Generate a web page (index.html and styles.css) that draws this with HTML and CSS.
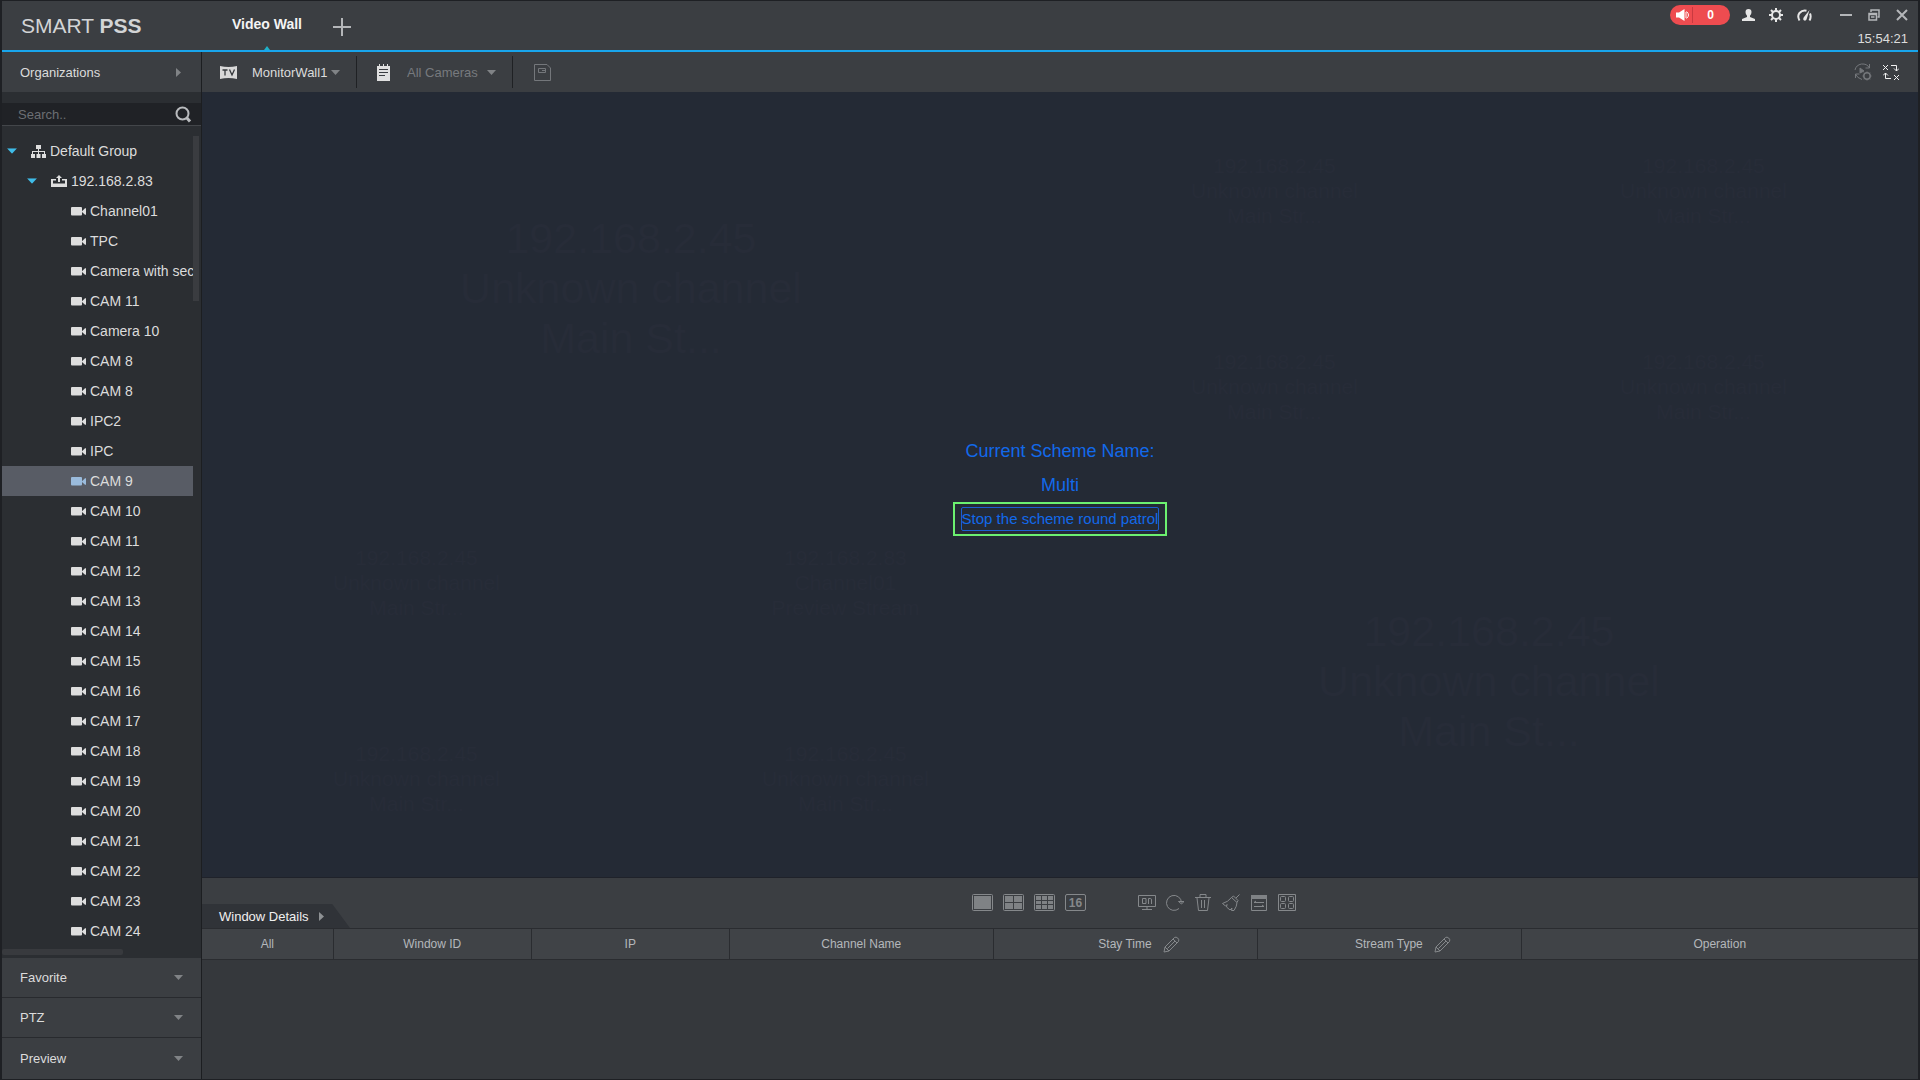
FILE: index.html
```html
<!DOCTYPE html>
<html lang="en">
<head>
    <meta charset="UTF-8">
    <meta name="viewport" content="width=device-width, initial-scale=1.0">
    <title>SMART PSS</title>
    <link rel="stylesheet" href="styles.css">
</head>
<body>
    <!-- shared icons -->
    <svg class="sprite" aria-hidden="true">
        <symbol id="cam" viewBox="0 0 15 9">
            <rect x="0" y="0" width="11" height="8.5" rx="1"/>
            <path d="M11 4.2L14 1.2H15V7.8H14L11 5Z"/>
        </symbol>
        <symbol id="down" viewBox="0 0 9 5"><path d="M0 0H9L4.5 5Z"/></symbol>
        <symbol id="right" viewBox="0 0 5 9"><path d="M0 0L5 4.5L0 9Z"/></symbol>
        <symbol id="pencil" viewBox="0 0 17 17">
            <path d="M1 16L2 11L11.500 1.500Q13 .5 14.700 2Q16.500 3.700 15.500 5.500L6 15ZM2 11L6 15M10 3L14 7M4.500 12.500L12 5"/>
        </symbol>
    </svg>

    <div class="app">
        <header class="titlebar">
            <h1 class="logo">SMART <b>PSS</b></h1>
            <nav class="tabs">
                <a class="tab" href="#">Video Wall</a>
                <button class="add" aria-label="New tab">
                    <svg width="18" height="18" viewBox="0 0 18 18"><path d="M9 0V18M0 9H18"/></svg>
                </button>
            </nav>
            <div class="status">
                <div class="icons">
                    <button class="alarm" aria-label="Alarms">
                        <svg width="14" height="12" viewBox="0 0 14 12"><path d="M0 3.500H3L8.500 0V12L3 8.500H0Z" fill="#fff"/><path d="M10 3V9M10.500 2.500Q14.500 6 10.500 9.500" fill="none" stroke="#fff"/></svg>
                        <span>0</span>
                    </button>
                    <button class="user" aria-label="User">
                        <svg width="13" height="12" viewBox="0 0 13 12"><path d="M3.500 3Q3.500 0 6.500 0T9.500 3Q9.500 5.500 8 6.800V8L13 10V12H0V10L5 8V6.800Q3.500 5.500 3.500 3Z"/></svg>
                    </button>
                    <button class="gear" aria-label="Settings">
                        <svg width="14" height="14" viewBox="0 0 14 14"><circle cx="7" cy="7" r="4" fill="none" stroke="#e6e6e6" stroke-width="2"/><path d="M7 0V3M7 11V14M0 7H3M11 7H14M2 2L4.200 4.200M9.800 9.800L12 12M12 2L9.800 4.200M4.200 9.800L2 12" stroke="#e6e6e6" stroke-width="2"/></svg>
                    </button>
                    <button class="gauge" aria-label="Performance">
                        <svg width="15" height="12" viewBox="0 0 15 12"><path d="M2.500 11.500Q0 7 2.500 4Q5.500 .8 9.500 1.800M13 4.500Q14.500 8 12.500 11.500" fill="none" stroke="#e6e6e6" stroke-width="2"/><path d="M12.500 1L9.500 10.500Q8.500 12.500 6.500 11Q5.800 9.500 7 8Z"/></svg>
                    </button>
                    <button class="minimize" aria-label="Minimize">
                        <svg width="12" height="2" viewBox="0 0 12 2"><path d="M0 0H12V2H0Z"/></svg>
                    </button>
                    <button class="restore" aria-label="Restore">
                        <svg class="outline" width="12" height="12" viewBox="0 0 12 12" stroke="#b4b6b9" stroke-width="1.500"><path d="M3 3V1H11V8H9.500"/><path d="M1 4.500H8.500V11H1ZM1 5.500H8.500M3 8H6.500"/></svg>
                    </button>
                    <button class="close" aria-label="Close">
                        <svg width="12" height="12" viewBox="0 0 12 12"><path d="M1 1L11 11M11 1L1 11" stroke="#b4b6b9" stroke-width="2"/></svg>
                    </button>
                </div>
                <time>15:54:21</time>
            </div>
        </header>

        <div class="body">
            <aside class="sidebar">
                <button class="section">Organizations <svg class="gray" width="5" height="9"><use href="#right"/></svg></button>
                <div class="search">
                    <input type="text" placeholder="Search.." aria-label="Search">
                    <svg width="17" height="17" viewBox="0 0 17 17"><circle cx="7.500" cy="7.500" r="6" fill="none" stroke="#b9bbbe" stroke-width="2"/><path d="M11.500 11.500L15 15.500" stroke="#b9bbbe" stroke-width="3"/></svg>
                </div>
                <div class="tree">
                    <ul>
                        <li class="group"><svg class="blue" width="10" height="6" viewBox="0 0 9 5"><use href="#down"/></svg><svg width="15" height="13" viewBox="0 0 15 13"><path d="M5 0H10V4H8V6H14V9H15V13H11V9H13V7H8V9H9.500V13H5.500V9H7V7H2V9H4V13H0V9H1V6H7V4H5Z"/></svg>Default Group</li>
                        <li class="device"><svg class="blue" width="10" height="6" viewBox="0 0 9 5"><use href="#down"/></svg><svg width="16" height="12" viewBox="0 0 16 12"><path d="M8 0L11 3H9V7H7V3H5ZM0 4H5V5.500H2V8.500H14V5.500H11V4H16V12H0Z"/></svg>192.168.2.83</li>
                        <li><svg><use href="#cam"/></svg>Channel01</li>
                        <li><svg><use href="#cam"/></svg>TPC</li>
                        <li><svg><use href="#cam"/></svg>Camera with sec</li>
                        <li><svg><use href="#cam"/></svg>CAM 11</li>
                        <li><svg><use href="#cam"/></svg>Camera 10</li>
                        <li><svg><use href="#cam"/></svg>CAM 8</li>
                        <li><svg><use href="#cam"/></svg>CAM 8</li>
                        <li><svg><use href="#cam"/></svg>IPC2</li>
                        <li><svg><use href="#cam"/></svg>IPC</li>
                        <li class="selected"><svg><use href="#cam"/></svg>CAM 9</li>
                        <li><svg><use href="#cam"/></svg>CAM 10</li>
                        <li><svg><use href="#cam"/></svg>CAM 11</li>
                        <li><svg><use href="#cam"/></svg>CAM 12</li>
                        <li><svg><use href="#cam"/></svg>CAM 13</li>
                        <li><svg><use href="#cam"/></svg>CAM 14</li>
                        <li><svg><use href="#cam"/></svg>CAM 15</li>
                        <li><svg><use href="#cam"/></svg>CAM 16</li>
                        <li><svg><use href="#cam"/></svg>CAM 17</li>
                        <li><svg><use href="#cam"/></svg>CAM 18</li>
                        <li><svg><use href="#cam"/></svg>CAM 19</li>
                        <li><svg><use href="#cam"/></svg>CAM 20</li>
                        <li><svg><use href="#cam"/></svg>CAM 21</li>
                        <li><svg><use href="#cam"/></svg>CAM 22</li>
                        <li><svg><use href="#cam"/></svg>CAM 23</li>
                        <li><svg><use href="#cam"/></svg>CAM 24</li>
                    </ul>
                    <div class="vscroll"></div>
                </div>
                <div class="hscroll"></div>
                <button class="section">Favorite <svg class="gray" width="9" height="5"><use href="#down"/></svg></button>
                <button class="section">PTZ <svg class="gray" width="9" height="5"><use href="#down"/></svg></button>
                <button class="section">Preview <svg class="gray" width="9" height="5"><use href="#down"/></svg></button>
            </aside>

            <main class="main">
                <div class="toolbar">
                    <label class="pick">
                        <svg width="17" height="13" viewBox="0 0 17 13"><path d="M0 0Q8.500 2 17 0V13Q8.500 11 0 13Z" fill="#d8d8d8"/><path d="M2.500 4H7.500M5 4V9.500M9.500 3.500L12 9L14.500 3.500" fill="none" stroke="#35383c" stroke-width="1.300"/></svg>
                        <select class="wall" aria-label="Wall"><option>MonitorWall1</option></select>
                        <svg class="gray" width="9" height="5"><use href="#down"/></svg>
                    </label>
                    <label class="pick">
                        <svg width="13" height="17" viewBox="0 0 13 17"><path d="M0 2H2V0H3V2H6V0H7V2H10V0H11V2H13V17H0Z" fill="#e0e0e0"/><path d="M2 5.500H11M2 8.500H11M2 11.500H8" stroke="#3a3d41"/></svg>
                        <select class="cameras" aria-label="Cameras" disabled><option>All Cameras</option></select>
                        <svg class="gray" width="9" height="5"><use href="#down"/></svg>
                    </label>
                    <button class="save" aria-label="Save">
                        <svg class="outline" width="17" height="17" viewBox="0 0 17 17" stroke="#74777b"><path d="M.5 .5H13L16.500 4V16.500H.5ZM4.500 4.500H11.500V8.500H4.500ZM8 6.500H11"/></svg>
                    </button>
                    <div class="tools">
                        <button aria-label="Scheme patrol">
                            <svg class="outline" width="18" height="18" viewBox="0 0 18 18" stroke="#74777b"><path d="M1 7Q2 2 7.500 1Q13 .5 15.500 5M15.500 1V5H11.500M1.500 11Q3 15 8 16.500M1.500 15V11H5.500"/><path d="M6 5L10 8L6 10Z" fill="#74777b"/><circle cx="13" cy="13" r="3.200" stroke-width="1.500"/><path d="M13 8.500V10M13 16V17.500M8.500 13H10M16 13H17.500M9.800 9.800L11 11M15 15L16.200 16.200M16.200 9.800L15 11M11 15L9.800 16.200"/></svg>
                        </button>
                        <button aria-label="Bind">
                            <svg class="outline" width="16" height="16" viewBox="0 0 16 16" stroke="#f0f0f0"><path d="M0 1L5 6M5 1L0 6M11 11L16 16M16 11L11 16M8 1.500H13.500V7M11 4.500L13.500 7L16 4.500M8 14.500H2.500V9M0 11.500L2.500 9L5 11.500"/></svg>
                        </button>
                    </div>
                </div>

                <section class="wall-view">
                    <div class="screen"><div class="cell big">192.168.2.45<br>Unknown channel<br>Main St...</div></div>
                    <div class="screen split">
                        <div class="cell">192.168.2.45<br>Unknown channel<br>Main Str...</div>
                        <div class="cell">192.168.2.45<br>Unknown channel<br>Main Str...</div>
                        <div class="cell">192.168.2.45<br>Unknown channel<br>Main Str...</div>
                        <div class="cell">192.168.2.45<br>Unknown channel<br>Main Str...</div>
                    </div>
                    <div class="screen split">
                        <div class="cell">192.168.2.45<br>Unknown channel<br>Main Str...</div>
                        <div class="cell">192.168.2.83<br>Channel01<br>Preview Stream</div>
                        <div class="cell">192.168.2.45<br>Unknown channel<br>Main Str...</div>
                        <div class="cell">192.168.2.45<br>Unknown channel<br>Main Str...</div>
                    </div>
                    <div class="screen"><div class="cell big">192.168.2.45<br>Unknown channel<br>Main St...</div></div>

                    <div class="scheme">
                        <p>Current Scheme Name:</p>
                        <p>Multi</p>
                        <div class="highlight"><button>Stop the scheme round patrol</button></div>
                    </div>
                </section>

                <div class="controls">
                    <button class="details-tab">Window Details <svg width="5" height="9"><use href="#right"/></svg></button>
                    <div class="layouts">
                        <button aria-label="1 window"><svg width="21" height="17" viewBox="0 0 21 17"><rect x=".5" y=".5" width="20" height="16" rx="1"/><path class="solid" d="M2 2H19V15H2Z"/></svg></button>
                        <button aria-label="4 windows"><svg width="21" height="17" viewBox="0 0 21 17"><rect x=".5" y=".5" width="20" height="16" rx="1"/><path class="solid" d="M2 2H10V8H2ZM11 2H19V8H11ZM2 9H10V15H2ZM11 9H19V15H11Z"/></svg></button>
                        <button aria-label="9 windows"><svg width="21" height="17" viewBox="0 0 21 17"><rect x=".5" y=".5" width="20" height="16" rx="1"/><path class="solid" d="M2 2H7V6H2ZM8 2H13V6H8ZM14 2H19V6H14ZM2 7H7V10H2ZM8 7H13V10H8ZM14 7H19V10H14ZM2 11H7V15H2ZM8 11H13V15H8ZM14 11H19V15H14Z"/></svg></button>
                        <button class="sixteen">16</button>
                    </div>
                    <div class="actions">
                        <button aria-label="Screen on"><svg width="18" height="17" viewBox="0 0 18 17"><path d="M.5 1.500H17.500V12.500H.5ZM9 12.500V15.500M4 15.500H14M4.500 4.500H8V9.500H4.500ZM10.500 10V4.500H12.500Q13.500 4.500 13.500 6V10"/></svg></button>
                        <button aria-label="Refresh"><svg width="18" height="17" viewBox="0 0 18 17"><path d="M13 14.500A7.500 7.500 0 1 1 15.500 8.500M12.500 7.500L15.500 10L18 7.500Z"/></svg></button>
                        <button aria-label="Delete"><svg width="18" height="17" viewBox="0 0 18 17"><path d="M1 3.500H17M6 3V.5H12V3M3 4L4.500 16.500H13.500L15 4M7.500 6V14M10.500 6V14"/></svg></button>
                        <button aria-label="Clear"><svg width="18" height="17" viewBox="0 0 18 17"><path d="M17.500 .5L14 4M9.500 3.500L11.500 2L16 6.500L15 8.500ZM9.500 3.500Q6 8 .5 9.500L3.500 12L5 10.500L4.500 13L8 16L10 14L9.500 16.500H12Q15 12 15 8.500"/></svg></button>
                        <button aria-label="Schedule"><svg width="18" height="17" viewBox="0 0 18 17"><path d="M1.500 1.500H16.500V16.500H1.500ZM4 8.500H14M6 7L4 8.500M4 12.500H14M12 11L14 12.500"/><path class="solid" d="M1 1H17V5H1Z"/></svg></button>
                        <button aria-label="Templates"><svg width="18" height="17" viewBox="0 0 18 17"><path d="M.5 .5H17.500V16.500H.5Z"/><rect x="2.500" y="2.500" width="5" height="5" rx="1"/><rect x="10.500" y="2.500" width="5" height="5" rx="1"/><rect x="2.500" y="9.500" width="5" height="5" rx="1"/><rect x="10.500" y="9.500" width="5" height="5" rx="1"/></svg></button>
                    </div>
                </div>

                <div class="details">
                    <table>
                        <thead>
                            <tr>
                                <th class="all">All</th>
                                <th class="narrow">Window ID</th>
                                <th class="narrow">IP</th>
                                <th class="wide">Channel Name</th>
                                <th class="wide editable">Stay Time <svg width="17" height="17"><use href="#pencil"/></svg></th>
                                <th class="wide editable">Stream Type <svg width="17" height="17"><use href="#pencil"/></svg></th>
                                <th>Operation</th>
                            </tr>
                        </thead>
                    </table>
                </div>
            </main>
        </div>
    </div>
</body>
</html>
```

FILE: styles.css
```css
*{
    margin: 0;
    padding: 0;
    box-sizing: border-box;
}
body{
    font-family: "Liberation Sans", Arial, sans-serif;
    font-size: 13px;
    color: #dcdcdc;
    background-color: #1e2024;
}
button, input, select{
    font: inherit;
    color: inherit;
    background: none;
    border: none;
}
button{
    display: flex;
    align-items: center;
    justify-content: center;
    cursor: pointer;
}
svg{
    flex: none;
    fill: #e6e6e6;
}
ul{
    list-style: none;
}
.sprite{
    position: absolute;
    width: 0;
    height: 0;
}
.gray{
    fill: #808386;
}
.outline{
    fill: none;
}
.app{
    display: flex;
    flex-direction: column;
    height: 100vh;
    border: 1px solid #1e2024;
    border-width: 1px 2px;
}

/* title bar */
.titlebar{
    display: flex;
    height: 51px;
    flex: none;
    background-color: #3b3e42;
    border-bottom: 2px solid #18a5ec;
}
.logo{
    width: 200px;
    padding: 12px 0 0 19px;
    font-size: 21px;
    line-height: 26px;
    font-weight: normal;
    color: #d2d4d6;
}
.tabs{
    display: flex;
    flex: 1;
}
.tab{
    position: relative;
    padding: 15px 30px 0;
    font-size: 14px;
    line-height: 16px;
    font-weight: bold;
    color: #f4f4f4;
    text-decoration: none;
}
.tab::after{
    content: "";
    position: absolute;
    bottom: 0;
    left: 50%;
    margin-left: -3px;
    border: 3px solid transparent;
    border-top: none;
    border-bottom: 4px solid #1fb0c8;
}
.add{
    height: 18px;
    margin: 17px 0 0 1px;
}
.add path{
    stroke: #b4b6b9;
    stroke-width: 2;
}
.status{
    display: flex;
    flex-direction: column;
    align-items: flex-end;
    padding: 4px 10px 0 0;
}
.icons{
    display: flex;
    align-items: center;
    height: 20px;
}
.alarm{
    width: 60px;
    height: 20px;
    margin-right: 12px;
    padding-left: 6px;
    border-radius: 10px;
    background-color: #ee4c50;
    font-size: 12px;
    font-weight: bold;
    color: #fff;
}
.alarm span{
    flex: 1;
    margin-left: 2px;
    padding-right: 2px;
    border-left: 1px solid #c93a40;
    text-align: center;
    line-height: 16px;
}
.user, .gear{
    margin-right: 14px;
}
.gauge{
    margin-right: 28px;
}
.minimize, .restore{
    margin-right: 16px;
}
.minimize svg{
    fill: #b4b6b9;
}
.status time{
    margin-top: 6px;
    line-height: 16px;
}

/* sidebar */
.body{
    display: flex;
    flex: 1;
    min-height: 0;
}
.sidebar{
    display: flex;
    flex-direction: column;
    width: 200px;
    flex: none;
    background-color: #2b2e32;
    border-right: 1px solid #1c1e21;
}
.section{
    flex: none;
    justify-content: space-between;
    height: 40px;
    padding: 0 18px;
    background-color: #3b3e42;
    border-bottom: 1px solid #282a2e;
}
.section:first-child{
    padding-right: 20px;
    border-bottom: none;
}
.section:last-child{
    height: 41px;
    border-bottom: none;
}
.search{
    display: flex;
    align-items: center;
    height: 23px;
    flex: none;
    margin: 11px 0 10px;
    padding-right: 9px;
    background-color: #202226;
    border-bottom: 1px solid #43464a;
}
.search input{
    flex: 1;
    min-width: 0;
    padding-left: 16px;
    outline: none;
}
.search input::placeholder{
    color: #6c6f73;
}
.tree{
    display: flex;
    flex: 1;
    min-height: 0;
    overflow: hidden;
}
.tree ul{
    flex: 1;
    min-width: 0;
    overflow: hidden;
}
.tree li{
    display: flex;
    align-items: center;
    gap: 4px;
    height: 30px;
    padding-left: 69px;
    font-size: 14px;
    white-space: nowrap;
}
.tree li svg{
    fill: #dedede;
}
.tree li:not(.group):not(.device) svg{
    width: 15px;
    height: 9px;
}
.tree .group{
    padding-left: 5px;
}
.tree .device{
    padding-left: 25px;
}
.tree li .blue{
    margin-right: 10px;
    fill: #3fbce8;
}
.tree .selected{
    background-color: #585c65;
}
.tree .selected svg{
    fill: #9abbdc;
}
.vscroll{
    width: 6px;
    height: 165px;
    margin-right: 2px;
    background-color: #3a3c40;
}
.hscroll{
    width: 61%;
    height: 6px;
    flex: none;
    margin: 2px 0 3px;
    border-radius: 2px;
    background-color: #383a3e;
}

/* toolbar */
.main{
    display: flex;
    flex-direction: column;
    flex: 1;
    min-width: 0;
}
.toolbar{
    display: flex;
    align-items: center;
    height: 40px;
    flex: none;
    background-color: #3b3e42;
}
.pick{
    display: flex;
    align-items: center;
    height: 32px;
    padding: 0 16px 0 18px;
    border-right: 1px solid #1f2124;
}
.pick select{
    appearance: none;
    margin-left: 15px;
    opacity: 1;
}
.pick:nth-child(2){
    padding-left: 20px;
}
.wall{
    width: 79px;
}
.pick .cameras{
    width: 80px;
    margin-left: 17px;
    color: #777a7e;
}
.save{
    margin-left: 21px;
}
.tools{
    display: flex;
    gap: 11px;
    margin-left: auto;
    padding-right: 19px;
}

/* video wall */
.wall-view{
    position: relative;
    display: grid;
    grid-template: 1fr 1fr / 1fr 1fr;
    flex: 1;
    min-height: 0;
    background-color: #242a35;
    border-bottom: 1px solid #1f222a;
}
.screen{
    display: grid;
}
.split{
    grid-template: 1fr 1fr / 1fr 1fr;
}
.cell{
    display: grid;
    place-content: center;
    text-align: center;
    font-size: 21px;
    line-height: 25px;
    color: #272c38;
}
.cell.big{
    font-size: 43px;
    line-height: 50px;
}
.scheme{
    position: absolute;
    inset: 0;
    display: flex;
    flex-direction: column;
    align-items: center;
    justify-content: center;
    font-size: 18px;
    line-height: 34px;
    color: #1269ea;
}
.highlight{
    padding: 3px 6px;
    border: 2px solid #6cf070;
}
.highlight button{
    height: 24px;
    border: 1px solid #1c5fd0;
    border-radius: 2px;
    font-size: 15px;
}

/* layout buttons and details */
.controls{
    display: flex;
    align-items: center;
    height: 50px;
    flex: none;
    background-color: #3b3e42;
}
.details-tab{
    align-self: flex-end;
    justify-content: flex-start;
    gap: 10px;
    width: 148px;
    height: 24px;
    padding-left: 17px;
    color: #f0f0f0;
    background-color: #303338;
    clip-path: polygon(0 0, 88% 0, 100% 100%, 0 100%);
}
.details-tab svg{
    fill: #8e9194;
}
.layouts, .actions{
    display: flex;
    gap: 10px;
    padding-bottom: 1px;
}
.layouts{
    margin-left: 36.25%;
}
.actions{
    margin-left: 52px;
}
.layouts svg, .actions svg{
    fill: none;
    stroke: #85888b;
}
.layouts .solid, .actions .solid{
    fill: #7f8285;
    stroke: none;
}
.sixteen{
    width: 21px;
    height: 17px;
    border: 1px solid #85888b;
    border-radius: 2px;
    font-size: 12px;
    font-weight: bold;
    color: #85888b;
}
.details{
    height: 151px;
    flex: none;
    background-color: #35383c;
}
.details table{
    width: 100%;
    table-layout: fixed;
    border-collapse: collapse;
}
.details th{
    height: 31px;
    border: 1px solid #2a2c30;
    border-width: 1px 1px 1px 0;
    background-color: #404347;
    font-size: 12px;
    font-weight: normal;
    color: #b4b7bb;
}
.details th:last-child{
    border-right: none;
}
.details .editable{
    padding-left: 28px;
}
.details th svg{
    margin-left: 8px;
    vertical-align: middle;
    fill: none;
    stroke: #85888b;
}
.all{
    width: 7.65%;
}
.narrow{
    width: 11.54%;
}
.wide{
    width: 15.38%;
}
```
